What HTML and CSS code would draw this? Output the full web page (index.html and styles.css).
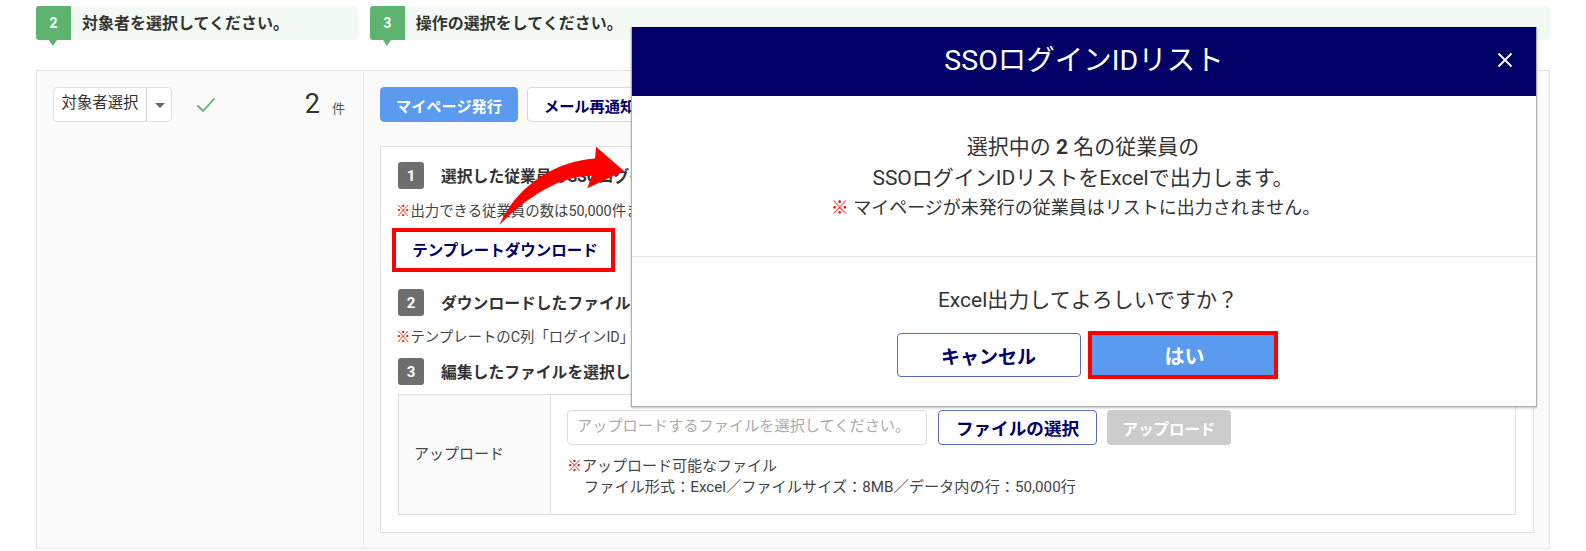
FILE: index.html
```html
<!DOCTYPE html>
<html lang="ja">
<head>
<meta charset="utf-8">
<title>SSOログインIDリスト</title>
<link rel="stylesheet" href="styles.css">
</head>
<body>
<div class="page">
  <div class="steps">
    <div class="step step-a"><span class="step-tag">2</span><span class="step-text">対象者を選択してください。</span></div>
    <div class="step step-b"><span class="step-tag">3</span><span class="step-text">操作の選択をしてください。</span></div>
  </div>

  <div class="panel">
    <aside class="side">
      <div class="select"><span class="select-label">対象者選択</span><span class="select-caret"></span></div>
      <svg class="check" viewBox="0 0 20 16" width="20" height="16"><path d="M1.5 8.5 L7 14 L18.5 1.5" fill="none" stroke="#5cb46f" stroke-width="1.8"/></svg>
      <div class="count"><span class="count-num">2</span><span class="count-unit">件</span></div>
    </aside>
    <main class="main">
      <div class="actions">
        <button class="btn btn-blue">マイページ発行</button>
        <button class="btn btn-white">メール再通知</button>
      </div>
      <section class="box">
        <div class="head"><span class="badge">1</span><span class="head-text">選択した従業員のSSOログインIDリストをダウンロード</span></div>
        <p class="note note-1"><span class="mark">※</span>出力できる従業員の数は50,000件までです。</p>
        <div class="frame"><button class="btn-template">テンプレートダウンロード</button></div>
        <div class="head head-2"><span class="badge">2</span><span class="head-text">ダウンロードしたファイルを編集してください。</span></div>
        <p class="note note-2"><span class="mark">※</span>テンプレートのC列「ログインID」を入力してください。</p>
        <div class="head head-3"><span class="badge">3</span><span class="head-text">編集したファイルを選択してアップロード</span></div>
        <div class="table">
          <div class="th">アップロード</div>
          <div class="td">
            <div class="file-row">
              <div class="input">アップロードするファイルを選択してください。</div>
              <button class="btn-file">ファイルの選択</button>
              <button class="btn-upload">アップロード</button>
            </div>
            <p class="file-note"><span class="mark">※</span>アップロード可能なファイル</p>
            <p class="file-note file-note-2">ファイル形式：Excel／ファイルサイズ：8MB／データ内の行：50,000行</p>
          </div>
        </div>
      </section>
    </main>
  </div>

  <svg class="arrow" viewBox="0 0 140 90" width="140" height="90"><path d="M9.300 85 C24 52 58 22 105 18.500 L106 6.700 L134 31 L97.300 48.300 L101.700 35.700 C70 36 38 56 9.300 85 Z" fill="#ff0000"/></svg>

  <div class="modal">
    <header class="modal-head">
      <span></span>
      <h1 class="modal-title">SSOログインIDリスト</h1>
      <svg class="close" viewBox="0 0 16 16" width="16" height="16"><path d="M1.500 1.500 L14.500 14.500 M14.500 1.500 L1.500 14.500" stroke="#fff" stroke-width="1.800" fill="none"/></svg>
    </header>
    <div class="modal-body">
      <p class="line">選択中の <b>2</b> 名の従業員の</p>
      <p class="line">SSOログインIDリストをExcelで出力します。</p>
      <p class="line-note"><span class="mark">※</span> マイページが未発行の従業員はリストに出力されません。</p>
    </div>
    <div class="modal-foot">
      <p class="question">Excel出力してよろしいですか？</p>
      <div class="modal-btns">
        <button class="btn-cancel">キャンセル</button>
        <button class="btn-yes">はい</button>
      </div>
    </div>
  </div>
</div>
</body>
</html>
```
FILE: styles.css
```css
* { box-sizing: border-box; margin: 0; padding: 0; }
html, body { background: #fff; }
body { font-family: Roboto, "Noto Sans CJK JP", "Liberation Sans", sans-serif; color: #333; }
button { font-family: inherit; cursor: pointer; }
p { white-space: nowrap; }

.page { position: relative; width: 1586px; height: 551px; overflow: hidden; padding: 6px 36px 0; }

.steps { display: flex; gap: 12px; }
.step { display: flex; align-items: center; height: 34px; background: #f3faf4; border-radius: 4px; }
.step-a { width: 322px; }
.step-b { width: 1181px; }
.step-tag { position: relative; flex: none; width: 35px; height: 34px; background: #5cb46f; color: #fff; font-size: 14px; font-weight: 700; display: flex; align-items: center; justify-content: center; border-radius: 3px 0 0 3px; }
.step-tag::after { content: ""; position: absolute; left: 13px; top: 34px; border-style: solid; border-width: 6px 4px 0; border-color: #5cb46f transparent transparent; }
.step-text { margin-left: 11px; padding-bottom: 3px; font-size: 16px; font-weight: 700; }

.panel { display: flex; width: 1514px; height: 479px; margin-top: 30px; background: #fbfbfb; border: 1px solid #e5e5e5; }
.side { flex: none; display: flex; align-items: flex-start; width: 327px; padding: 16px 17px 16px 16px; border-right: 1px solid #eeeeee; }
.select { display: flex; width: 119px; height: 35px; background: #fff; border: 1px solid #e0e0e0; border-radius: 4px; }
.select-label { width: 93px; border-right: 1px solid #ccc; font-size: 15.400px; line-height: 31px; text-align: center; white-space: nowrap; }
.select-caret { flex: 1; position: relative; }
.select-caret::after { content: ""; position: absolute; left: 8px; top: 15px; border-style: solid; border-width: 5px 5px 0; border-color: #666 transparent transparent; }
.check { margin: 10px 0 0 24px; }
.count { margin-left: auto; display: flex; align-items: baseline; margin-right: 1px; }
.count-num { font-size: 27px; line-height: 35px; }
.count-unit { margin-left: 12px; font-size: 13px; color: #555; }

.main { flex: 1; display: flex; flex-direction: column; padding: 16px 15px 17px 16px; }
.actions { display: flex; gap: 9px; }
.btn { height: 35px; border-radius: 4px; font-size: 15.200px; font-weight: 700; white-space: nowrap; }
.btn-blue { width: 138px; background: #5a9bef; border: 1px solid #5a9bef; color: #fff; }
.btn-white { width: 125px; background: #fff; border: 1px solid #d8d8d8; color: #000066; }

.box { flex: 1; margin-top: 24px; padding: 15px 17px 17px; background: #fff; border: 1px solid #e2e2e2; }
.head { display: flex; align-items: center; height: 27px; }
.head-2 { margin-top: 17px; }
.head-3 { margin-top: 11px; }
.badge { flex: none; width: 26px; height: 27px; background: #6e6e6e; color: #fff; border-radius: 3px; font-size: 15px; font-weight: 700; display: flex; align-items: center; justify-content: center; }
.head-text { margin-left: 17px; font-size: 15.800px; font-weight: 700; white-space: nowrap; }
.note { margin-left: -2px; font-size: 14.400px; line-height: 18px; color: #444; }
.note-1 { margin-top: 14px; }
.note-2 { margin-top: 13px; }
.mark { color: #f01010; font-weight: 700; }

.frame { display: inline-flex; margin: 7px 0 0 -6px; border: 4px solid #ff0000; vertical-align: top; }
.btn-template { display: block; width: 215px; height: 36px; padding: 0 0 3px 3px; background: #fff; border: 0; color: #000066; font-size: 15.500px; font-weight: 700; }

.table { display: flex; height: 121px; margin-top: 9px; border: 1px solid #dedede; }
.th { flex: none; width: 152px; padding: 0 0 4px 15px; display: flex; align-items: center; background: #fafafa; border-right: 1px solid #dedede; font-size: 15px; color: #444; }
.td { flex: 1; padding: 15px 16px 0; background: #fff; }
.file-row { display: flex; height: 35px; }
.input { width: 360px; padding-left: 9px; background: #fff; border: 1px solid #dcdcdc; border-radius: 4px; font-size: 15.200px; line-height: 31px; color: #aaa; white-space: nowrap; overflow: hidden; }
.btn-file { width: 159px; margin-left: 11px; background: #fff; border: 1px solid #5c6bb5; border-radius: 4px; color: #000066; font-size: 17.600px; font-weight: 700; white-space: nowrap; }
.btn-upload { width: 124px; margin-left: 10px; background: #cccccc; border: 0; border-radius: 4px; color: #fff; font-size: 15.400px; font-weight: 700; white-space: nowrap; }
.file-note { font-size: 15px; line-height: 21px; color: #444; margin-top: 11px; }
.file-note-2 { margin-top: 0; padding-left: 17px; font-size: 15.200px; }

.arrow { position: absolute; left: 490px; top: 140px; }

.modal { position: absolute; left: 631px; top: 27px; width: 906px; height: 380px; display: flex; flex-direction: column; background: #fff; border: 1px solid #b0b0b0; border-top: 0; box-shadow: 0 1px 2px rgba(0,0,0,.25); }
.modal-head { flex: none; display: grid; grid-template-columns: 1fr auto 1fr; align-items: center; height: 69px; padding-bottom: 8px; background: #000066; }
.modal-title { font-size: 28.500px; font-weight: 400; color: #fff; white-space: nowrap; }
.close { justify-self: end; margin: 4px 23px 0 0; }
.modal-body { flex: none; height: 161px; padding: 36px 2px 0 0; text-align: center; border-bottom: 1px solid #e4e4e4; }
.line { font-size: 21px; line-height: 31px; }
.line-note { padding-right: 15px; font-size: 18px; line-height: 28px; }
.modal-foot { flex: 1; text-align: center; }
.question { margin-top: 28px; padding-left: 8px; font-size: 21px; line-height: 30px; }
.modal-btns { display: flex; justify-content: center; align-items: center; gap: 7px; margin-top: 16px; padding-left: 6px; }
.btn-cancel { width: 184px; height: 44px; background: #fff; border: 1px solid #5c6bb5; border-radius: 4px; color: #000066; font-size: 19px; font-weight: 700; }
.btn-yes { width: 190px; height: 48px; padding-left: 4px; background: #5a9bef; border: 4px solid #ff0000; color: #fff; font-size: 20px; font-weight: 700; }
```
